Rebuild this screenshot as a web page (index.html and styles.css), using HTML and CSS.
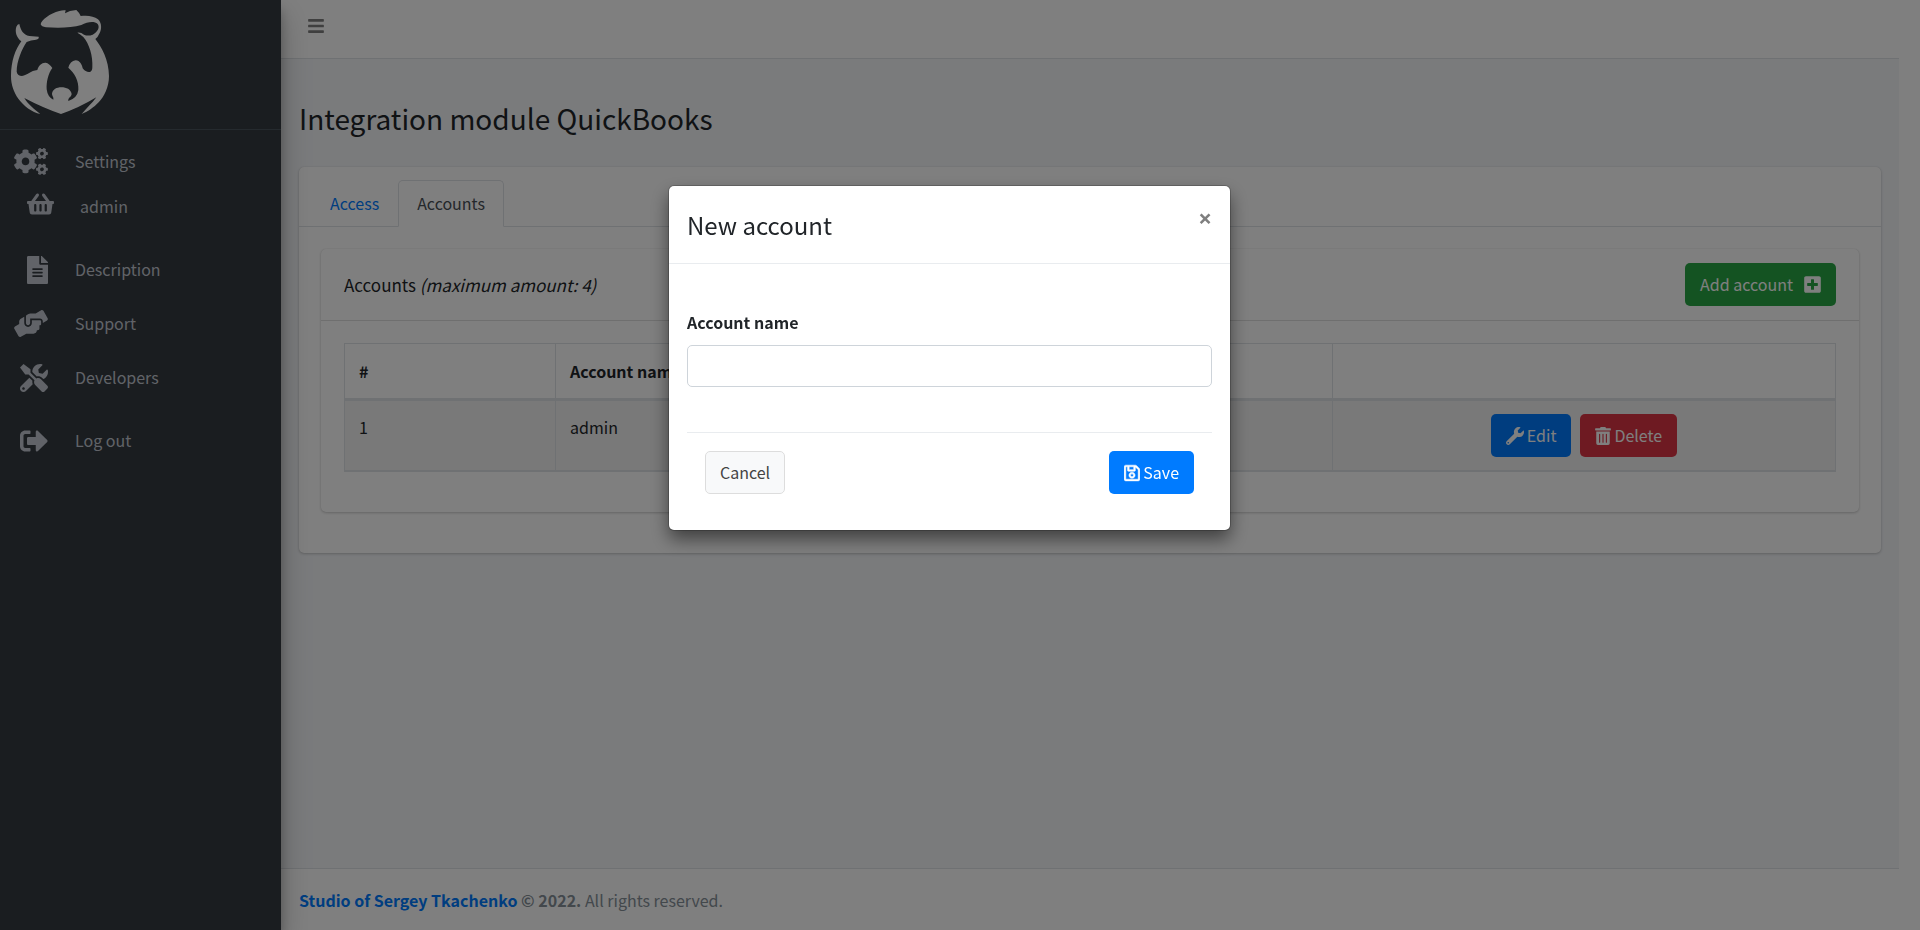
FILE: index.html
```html
<!DOCTYPE html>
<html lang="en">
<head>
<meta charset="utf-8">
<meta name="viewport" content="width=device-width, initial-scale=1">
<title>Integration module QuickBooks</title>
<link rel="stylesheet" href="styles.css">
</head>
<body>
<div class="page">
  <aside class="sidebar">
    <a class="brand" href="#" aria-label="Home">
      <svg class="brand-logo" viewBox="30 27 300 318" aria-hidden="true">
        <path d="M122 73C124 60 150 40 178 33Q188 30 197 31L195 40L210 33L229 30Q238 38 242 48C262 45 282 48 294 58C306 70 305 88 299 99Q294 111 286 117C304 140 327 180 327 228C327 262 312 290 296 307C282 322 262 336 245 342C258 326 276 310 289 292Q236 324 183 342Q130 324 73 294C85 314 104 328 121 342C96 337 70 317 55 296C41 276 33 254 33 228C33 184 46 148 64 124C50 113 44 96 49 80Q52 73 58 72C62 90 70 105 88 108L116 110Q118 117 108 119Q92 120 80 126C66 146 50 184 50 215Q53 228 66 228C82 226 92 212 112 210C116 196 126 187 137 188Q148 190 157 204C144 222 139 246 140 268Q143 292 160 299C162 291 156 288 156 281C158 268 170 262 184 262C200 262 212 268 215 282C214 292 204 292 205 303Q232 294 235 270C237 242 224 220 205 203Q210 184 227 181C240 182 246 194 248 205Q258 218 270 216Q277 213 277 202C279 168 268 132 250 111Q240 102 232 98Q242 96 252 104Q264 109 278 104C294 95 300 82 293 72C282 62 262 66 244 75C216 84 174 84 138 82Q124 80 122 73Z"/>
      </svg>
    </a>
    <nav class="menu" aria-label="Main menu">
      <a class="menu-item" href="#">
        <span class="menu-icon"><svg width="34" height="27" viewBox="0 0 640 512" aria-hidden="true"><path d="M512.1 191l-8.2 14.3c-3 5.3-9.4 7.5-15.1 5.4-11.8-4.4-22.6-10.7-32.1-18.6-4.6-3.8-5.8-10.5-2.8-15.7l8.2-14.3c-6.9-8-12.3-17.3-15.9-27.4h-16.5c-6 0-11.2-4.3-12.2-10.3-2-12-2.1-24.6 0-37.1 1-6 6.2-10.4 12.2-10.4h16.5c3.6-10.1 9-19.4 15.9-27.4l-8.2-14.3c-3-5.2-1.9-11.9 2.8-15.7 9.5-7.9 20.4-14.2 32.1-18.6 5.7-2.1 12.1.1 15.1 5.4l8.2 14.3c10.5-1.9 21.2-1.9 31.7 0L552 6.3c3-5.3 9.4-7.5 15.1-5.4 11.8 4.4 22.6 10.7 32.1 18.6 4.6 3.8 5.8 10.5 2.8 15.7l-8.2 14.3c6.9 8 12.3 17.3 15.9 27.4h16.5c6 0 11.2 4.3 12.2 10.3 2 12 2.1 24.6 0 37.1-1 6-6.2 10.4-12.2 10.4h-16.5c-3.6 10.1-9 19.4-15.9 27.4l8.2 14.3c3 5.2 1.9 11.9-2.8 15.7-9.5 7.9-20.4 14.2-32.1 18.6-5.7 2.1-12.1-.1-15.1-5.4l-8.2-14.3c-10.4 1.9-21.2 1.9-31.7 0zm-10.5-58.8c38.5 29.6 82.4-14.3 52.8-52.8-38.5-29.7-82.4 14.3-52.8 52.8zM386.3 286.1l33.7 16.8c10.1 5.8 14.5 18.1 10.5 29.1-8.9 24.2-26.4 46.4-42.6 65.8-7.4 8.9-20.2 11.1-30.3 5.3l-29.1-16.8c-16 13.7-34.6 24.6-54.9 31.7v33.6c0 11.6-8.3 21.6-19.7 23.6-24.6 4.2-50.4 4.4-75.9 0-11.5-2-20-11.9-20-23.6V418c-20.3-7.2-38.9-18-54.9-31.7L74 403c-10 5.8-22.9 3.6-30.3-5.3-16.2-19.4-33.3-41.6-42.2-65.7-4-10.9.4-23.2 10.5-29.1l33.3-16.8c-3.9-20.9-3.9-42.4 0-63.4L12 205.8c-10.1-5.8-14.6-18.1-10.5-29 8.9-24.2 26-46.4 42.2-65.8 7.4-8.9 20.2-11.1 30.3-5.3l29.1 16.8c16-13.7 34.6-24.6 54.9-31.7V57.1c0-11.5 8.2-21.5 19.6-23.5 24.6-4.2 50.5-4.4 76-.1 11.5 2 20 11.9 20 23.6v33.6c20.3 7.2 38.9 18 54.9 31.7l29.1-16.8c10-5.8 22.9-3.6 30.3 5.3 16.2 19.4 33.2 41.6 42.1 65.8 4 10.9.1 23.2-10 29.1l-33.7 16.8c3.9 21 3.9 42.5 0 63.5zm-117.6 21.1c59.2-77-28.7-164.9-105.7-105.7-59.2 77 28.7 164.9 105.7 105.7zm243.4 182.7l-8.2 14.3c-3 5.3-9.4 7.5-15.1 5.4-11.8-4.4-22.6-10.7-32.1-18.6-4.6-3.8-5.8-10.5-2.8-15.7l8.2-14.3c-6.9-8-12.3-17.3-15.9-27.4h-16.5c-6 0-11.2-4.3-12.2-10.3-2-12-2.1-24.6 0-37.1 1-6 6.2-10.4 12.2-10.4h16.5c3.6-10.1 9-19.4 15.9-27.4l-8.2-14.3c-3-5.2-1.9-11.9 2.8-15.7 9.5-7.9 20.4-14.2 32.1-18.6 5.7-2.1 12.1.1 15.1 5.4l8.2 14.3c10.5-1.9 21.2-1.9 31.7 0l8.2-14.3c3-5.3 9.4-7.5 15.1-5.4 11.8 4.4 22.6 10.7 32.1 18.6 4.6 3.8 5.8 10.5 2.8 15.7l-8.2 14.3c6.9 8 12.3 17.3 15.9 27.4h16.5c6 0 11.2 4.3 12.2 10.3 2 12 2.1 24.6 0 37.1-1 6-6.2 10.4-12.2 10.4h-16.5c-3.6 10.1-9 19.4-15.9 27.4l8.2 14.3c3 5.2 1.9 11.9-2.8 15.7-9.5 7.9-20.4 14.2-32.1 18.6-5.7 2.1-12.1-.1-15.1-5.4l-8.2-14.3c-10.4 1.9-21.2 1.9-31.7 0zM501.6 431c38.5 29.6 82.4-14.3 52.8-52.8-38.5-29.6-82.4 14.3-52.8 52.8z"/></svg></span>
        <span>Settings</span>
      </a>
      <a class="menu-item menu-item-sub" href="#">
        <span class="menu-icon"><svg width="27" height="24" viewBox="0 0 576 512" aria-hidden="true"><path d="M576 216v16c0 13.255-10.745 24-24 24h-8l-26.113 182.788C514.509 462.435 494.257 480 470.37 480H105.63c-23.887 0-44.139-17.565-47.518-41.212L32 256h-8c-13.255 0-24-10.745-24-24v-16c0-13.255 10.745-24 24-24h67.341l106.78-146.821c10.395-14.292 30.407-17.453 44.701-7.058 14.293 10.395 17.453 30.408 7.058 44.701L170.477 192h235.046L326.12 82.821c-10.395-14.292-7.234-34.306 7.059-44.701 14.291-10.395 34.306-7.235 44.701 7.058L484.659 192H552c13.255 0 24 10.745 24 24zM312 392V280c0-13.255-10.745-24-24-24s-24 10.745-24 24v112c0 13.255 10.745 24 24 24s24-10.745 24-24zm112 0V280c0-13.255-10.745-24-24-24s-24 10.745-24 24v112c0 13.255 10.745 24 24 24s24-10.745 24-24zm-224 0V280c0-13.255-10.745-24-24-24s-24 10.745-24 24v112c0 13.255 10.745 24 24 24s24-10.745 24-24z"/></svg></span>
        <span>admin</span>
      </a>
      <a class="menu-item menu-item-section" href="#">
        <span class="menu-icon"><svg width="21" height="28" viewBox="0 0 384 512" aria-hidden="true"><path d="M224 136V0H24C10.7 0 0 10.7 0 24v464c0 13.3 10.7 24 24 24h336c13.3 0 24-10.7 24-24V160H248c-13.2 0-24-10.8-24-24zm64 236c0 6.6-5.4 12-12 12H108c-6.6 0-12-5.4-12-12v-8c0-6.6 5.4-12 12-12h168c6.6 0 12 5.4 12 12v8zm0-64c0 6.6-5.4 12-12 12H108c-6.6 0-12-5.4-12-12v-8c0-6.6 5.4-12 12-12h168c6.6 0 12 5.4 12 12v8zm0-72v8c0 6.6-5.4 12-12 12H108c-6.6 0-12-5.4-12-12v-8c0-6.6 5.4-12 12-12h168c6.6 0 12 5.4 12 12zm96-114.1v6.1H256V0h6.1c6.4 0 12.5 2.5 17 7l97.9 98c4.5 4.5 7 10.6 7 16.9z"/></svg></span>
        <span>Description</span>
      </a>
      <a class="menu-item menu-item-spaced" href="#">
        <span class="menu-icon"><svg width="34" height="27" viewBox="0 0 640 512" aria-hidden="true"><path d="M488 192H336v56c0 39.7-32.3 72-72 72s-72-32.3-72-72V126.4l-64.9 39C107.8 176.9 96 197.8 96 220.2v47.3l-80 46.2C.7 322.5-4.6 342.1 4.3 357.4l80 138.6c8.8 15.3 28.4 20.5 43.7 11.7L231.4 448H368c35.3 0 64-28.7 64-64h16c17.7 0 32-14.3 32-32v-64h8c13.3 0 24-10.7 24-24v-48c0-13.3-10.7-24-24-24zm147.7-37.4L555.7 16C546.9.7 527.3-4.5 512 4.3L408.6 64H306.4c-12 0-23.7 3.4-33.9 9.7L239 94.6c-9.4 5.8-15 16.1-15 27.1V248c0 22.1 17.9 40 40 40s40-17.9 40-40v-88h184c30.9 0 56 25.1 56 56v28.5l80-46.2c15.3-8.9 20.5-28.4 11.7-43.7z"/></svg></span>
        <span>Support</span>
      </a>
      <a class="menu-item menu-item-spaced" href="#">
        <span class="menu-icon"><svg width="28" height="28" viewBox="0 0 512 512" aria-hidden="true"><path d="M501.1 395.7L384 278.6c-23.1-23.1-57.6-27.6-85.4-13.9L192 158.1V96L64 0 0 64l96 128h62.1l106.6 106.6c-13.6 27.8-9.2 62.3 13.9 85.4l117.1 117.1c14.6 14.6 38.2 14.6 52.7 0l52.7-52.7c14.5-14.6 14.5-38.2 0-52.7zM331.7 225c28.3 0 54.9 11 74.9 31l19.4 19.4c15.8-6.9 30.8-16.5 43.8-29.5 37.1-37.1 49.7-89.3 37.9-136.7-2.2-9-13.5-12.1-20.1-5.5l-74.4 74.4-67.9-11.3L334 98.9l74.4-74.4c6.6-6.6 3.4-17.9-5.7-20.2-47.4-11.7-99.6.9-136.6 37.9-28.5 28.5-41.9 66.1-41.2 103.6l82.1 82.1c8.1-1.9 16.5-2.9 24.7-2.9zm-103.9 82l-56.7-56.7L18.7 402.8c-25 25-25 65.5 0 90.5s65.5 25 90.5 0l123.6-123.6c-7.6-19.9-9.9-41.6-5-62.7zM64 472c-13.2 0-24-10.8-24-24 0-13.3 10.7-24 24-24s24 10.7 24 24c0 13.2-10.7 24-24 24z"/></svg></span>
        <span>Developers</span>
      </a>
      <a class="menu-item menu-item-section" href="#">
        <span class="menu-icon"><svg width="28" height="28" viewBox="0 0 512 512" aria-hidden="true"><path d="M497 273L329 441c-15 15-41 4.500-41-17v-96H152c-13.300 0-24-10.700-24-24v-96c0-13.300 10.700-24 24-24h136V88c0-21.400 25.900-32 41-17l168 168c9.300 9.400 9.300 24.600 0 34zM192 436v-40c0-6.600-5.400-12-12-12H96c-17.700 0-32-14.300-32-32V160c0-17.700 14.300-32 32-32h84c6.600 0 12-5.400 12-12V76c0-6.600-5.400-12-12-12H96c-53 0-96 43-96 96v192c0 53 43 96 96 96h84c6.600 0 12-5.400 12-12z"/></svg></span>
        <span>Log out</span>
      </a>
    </nav>
  </aside>

  <div class="main">
    <header class="topbar">
      <button class="toggle" type="button" aria-label="Toggle menu">
        <svg width="16" height="18" viewBox="0 0 448 512" aria-hidden="true"><path d="M16 132h416c8.800 0 16-7.200 16-16V76c0-8.800-7.200-16-16-16H16C7.200 60 0 67.200 0 76v40c0 8.800 7.200 16 16 16zm0 160h416c8.800 0 16-7.200 16-16v-40c0-8.800-7.200-16-16-16H16c-8.800 0-16 7.200-16 16v40c0 8.800 7.200 16 16 16zm0 160h416c8.800 0 16-7.200 16-16v-40c0-8.800-7.200-16-16-16H16c-8.800 0-16 7.200-16 16v40c0 8.800 7.200 16 16 16z"/></svg>
      </button>
    </header>

    <main class="content">
      <h1 class="page-title">Integration module QuickBooks</h1>
      <section class="card">
        <nav class="tabs" aria-label="Sections">
          <a class="tab" href="#">Access</a>
          <a class="tab tab-active" href="#" aria-current="page">Accounts</a>
        </nav>
        <div class="card-body">
          <section class="card card-inner">
            <div class="card-header">
              <div class="card-title">Accounts <i>(maximum amount: 4)</i></div>
              <button class="btn btn-success" type="button">Add account
                <svg width="17" height="19" viewBox="0 0 448 512" aria-hidden="true"><path d="M400 32H48C21.500 32 0 53.500 0 80v352c0 26.500 21.500 48 48 48h352c26.500 0 48-21.500 48-48V80c0-26.500-21.500-48-48-48zm-32 252c0 6.600-5.400 12-12 12h-92v92c0 6.600-5.400 12-12 12h-56c-6.600 0-12-5.400-12-12v-92H92c-6.600 0-12-5.400-12-12v-56c0-6.600 5.400-12 12-12h92v-92c0-6.600 5.400-12 12-12h56c6.600 0 12 5.400 12 12v92h92c6.600 0 12 5.400 12 12v56z"/></svg>
              </button>
            </div>
            <div class="card-table">
              <table class="accounts">
                <thead>
                  <tr><th class="col-number" scope="col">#</th><th scope="col">Account name</th><th class="col-actions" scope="col" aria-label="Actions"></th></tr>
                </thead>
                <tbody>
                  <tr>
                    <td>1</td>
                    <td>admin</td>
                    <td>
                      <div class="actions">
                        <button class="btn btn-primary" type="button"><svg width="18" height="18" viewBox="0 0 512 512" aria-hidden="true"><path d="M507.730 109.100c-2.240-9.030-13.540-12.090-20.120-5.510l-74.360 74.360-67.880-11.310-11.310-67.880 74.360-74.360c6.620-6.620 3.430-17.900-5.660-20.160-47.380-11.740-99.550.91-136.580 37.930-39.640 39.640-50.550 97.100-34.050 147.200L18.740 402.760c-24.990 24.990-24.990 65.510 0 90.500 24.990 24.990 65.510 24.990 90.500 0l213.210-213.210c50.120 16.710 107.470 5.680 147.370-34.220 37.070-37.070 49.700-89.320 37.910-136.730zM64 472c-13.250 0-24-10.750-24-24 0-13.260 10.750-24 24-24s24 10.740 24 24c0 13.250-10.750 24-24 24z"/></svg>Edit</button>
                        <button class="btn btn-danger" type="button"><svg width="16" height="18" viewBox="0 0 448 512" aria-hidden="true"><path d="M32 464a48 48 0 0 0 48 48h288a48 48 0 0 0 48-48V128H32zm272-256a16 16 0 0 1 32 0v224a16 16 0 0 1-32 0zm-96 0a16 16 0 0 1 32 0v224a16 16 0 0 1-32 0zm-96 0a16 16 0 0 1 32 0v224a16 16 0 0 1-32 0zM432 32H312l-9.400-18.700A24 24 0 0 0 281.100 0H166.800a23.720 23.720 0 0 0-21.400 13.300L136 32H16A16 16 0 0 0 0 48v32a16 16 0 0 0 16 16h416a16 16 0 0 0 16-16V48a16 16 0 0 0-16-16z"/></svg>Delete</button>
                      </div>
                    </td>
                  </tr>
                </tbody>
              </table>
            </div>
          </section>
        </div>
      </section>
    </main>

    <footer class="footer"><strong><a href="#">Studio of Sergey Tkachenko</a> © 2022.</strong> All rights reserved.</footer>
  </div>
</div>

<div class="overlay">
  <form class="modal" role="dialog" aria-modal="true" aria-labelledby="modal-title">
    <div class="modal-header">
      <h2 class="modal-title" id="modal-title">New account</h2>
      <button class="modal-close" type="button" aria-label="Close">×</button>
    </div>
    <div class="modal-body">
      <div class="field">
        <label for="account-name">Account name</label>
        <input id="account-name" type="text">
      </div>
      <div class="modal-footer">
        <button class="btn btn-light" type="button">Cancel</button>
        <button class="btn btn-primary" type="submit"><svg class="icon-save" width="16" height="18" viewBox="0 0 448 512" aria-hidden="true"><path d="M433.941 129.941l-83.882-83.882A48 48 0 0 0 316.118 32H48C21.490 32 0 53.490 0 80v352c0 26.510 21.490 48 48 48h352c26.510 0 48-21.490 48-48V163.882a48 48 0 0 0-14.059-33.941zM272 80v80H144V80h128zm122 352H54a6 6 0 0 1-6-6V86a6 6 0 0 1 6-6h42v104c0 13.255 10.745 24 24 24h176c13.255 0 24-10.745 24-24V83.882l78.243 78.243a6 6 0 0 1 1.757 4.243V426a6 6 0 0 1-6 6zM224 232c-48.523 0-88 39.477-88 88s39.477 88 88 88 88-39.477 88-88-39.477-88-88-88zm0 128c-22.056 0-40-17.944-40-40s17.944-40 40-40 40 17.944 40 40-17.944 40-40 40z"/></svg>Save</button>
      </div>
    </div>
  </form>
</div>
</body>
</html>
```

FILE: styles.css
```css
*,
*::before,
*::after {
  box-sizing: border-box;
}

body {
  margin: 0;
  background: #fff;
  color: #212529;
  font-family: "Noto Sans CJK SC", "Noto Sans", sans-serif;
  font-size: 16px;
  line-height: 27px;
}

a {
  color: #007bff;
  text-decoration: none;
}

svg {
  display: block;
  flex: none;
  fill: currentColor;
}

button,
input {
  font: inherit;
}

.page {
  display: flex;
  min-height: 100vh;
  padding-right: 21px;
}

/* Sidebar */

.sidebar {
  flex: 0 0 281px;
  z-index: 1;
  background: #343a40;
  box-shadow: 0 14px 28px rgba(0, 0, 0, .25), 0 10px 10px rgba(0, 0, 0, .22);
}

.brand {
  display: block;
  padding: 9px 10px 14px;
  border-bottom: 1px solid #4b545c;
  color: #fff;
}

.brand-logo {
  width: 100px;
  height: 106px;
}

.menu {
  display: flex;
  flex-direction: column;
  padding-top: 9px;
}

.menu-item {
  display: flex;
  align-items: center;
  gap: 27px;
  height: 45px;
  color: #c2c7d0;
}

.menu-icon {
  display: flex;
  justify-content: flex-end;
  width: 48px;
}

.menu-item-sub {
  gap: 26px;
}

.menu-item-sub .menu-icon {
  width: 54px;
  padding-bottom: 6px;
}

.menu-item-section {
  margin-top: 18px;
}

.menu-item-spaced {
  margin-top: 9px;
}

/* Main column */

.main {
  display: flex;
  flex: 1;
  flex-direction: column;
  min-width: 0;
  background: #f4f6f9;
}

.topbar {
  display: flex;
  padding: 8px 9px;
  border-bottom: 1px solid #dee2e6;
  background: #fff;
}

.toggle {
  height: 42px;
  padding: 0 18px 6px;
  border: 0;
  background: none;
  color: rgba(0, 0, 0, .5);
}

.content {
  flex: 1;
  padding: 42px 18px;
}

.page-title {
  margin: 0 0 31px;
  font-size: 28px;
  font-weight: 400;
  line-height: 35px;
}

.card {
  border-radius: 5px;
  background: #fff;
  box-shadow: 0 0 1px rgba(0, 0, 0, .125), 0 1px 3px rgba(0, 0, 0, .2);
}

.card-inner {
  margin-bottom: 19px;
}

.tabs {
  display: flex;
  padding: 13px 12px 0;
  border-bottom: 1px solid #dee2e6;
}

.tab {
  margin-bottom: -1px;
  padding: 9px 18px;
  border: 1px solid transparent;
  border-radius: 5px 5px 0 0;
}

.tab-active {
  border-color: #dee2e6 #dee2e6 #fff;
  background: #fff;
  color: #495057;
}

.card-body {
  padding: 22px;
}

.card-header {
  display: flex;
  align-items: center;
  justify-content: space-between;
  padding: 14px 23px;
  border-bottom: 1px solid #dfdfdf;
}

.card-title {
  font-size: 17px;
}

.card-table {
  padding: 22px 23px 40px;
}

.accounts {
  width: 100%;
  border-collapse: collapse;
  table-layout: fixed;
}

.accounts th,
.accounts td {
  padding: 13px 14px;
  border: 1px solid #dee2e6;
  text-align: left;
  vertical-align: top;
}

.accounts th {
  padding-top: 14px;
  border-bottom-width: 3px;
}

.accounts td {
  border-bottom-width: 2px;
  background: #f2f2f2;
}

.accounts .col-number {
  width: 211px;
}

.accounts .col-actions {
  width: 503px;
}

.actions {
  display: flex;
  justify-content: center;
  gap: 9px;
}

.footer {
  padding: 18px 18px 16px;
  border-top: 1px solid #dee2e6;
  background: #fff;
  color: #869099;
}

/* Buttons */

.btn {
  display: flex;
  align-items: center;
  gap: 3px;
  padding: 7px 14px;
  border: 1px solid transparent;
  border-radius: 5px;
  color: #fff;
}

.btn-primary {
  background: #007bff;
}

.btn-success {
  gap: 11px;
  background: #28a745;
}

.btn-danger {
  background: #dc3545;
}

.btn-light {
  border-color: #ddd;
  background: #f8f9fa;
  color: #444;
}

.icon-save {
  stroke: currentColor;
  stroke-width: 14;
}

/* Dialog */

.overlay {
  position: fixed;
  inset: 0;
  z-index: 2;
  display: flex;
  align-items: flex-start;
  justify-content: center;
  padding: 186px 21px 0 0;
  background: rgba(0, 0, 0, .5);
}

.modal {
  width: 100%;
  max-width: 561px;
  border-radius: 5px;
  background: #fff;
  box-shadow: 0 0 0 1px rgba(0, 0, 0, .2), 0 9px 18px rgba(0, 0, 0, .5);
}

.modal-header {
  display: flex;
  align-items: flex-start;
  justify-content: space-between;
  padding: 18px;
  border-bottom: 1px solid #e9ecef;
}

.modal-title {
  margin: 0;
  font-size: 24px;
  font-weight: 400;
  line-height: 41px;
}

.modal-close {
  padding: 0;
  border: 0;
  background: none;
  color: #7f7f7f;
  font-family: "Open Sans", sans-serif;
  font-size: 24px;
  font-weight: 700;
  line-height: 27px;
}

.modal-body {
  padding: 18px;
}

.field {
  display: flex;
  flex-direction: column;
  gap: 9px;
  padding: 27px 0 45px;
}

.field label {
  font-weight: 700;
}

.field input {
  width: 100%;
  height: 42px;
  padding: 7px 14px;
  border: 1px solid #ced4da;
  border-radius: 5px;
  background: #fff;
  color: #495057;
}

.modal-footer {
  display: flex;
  justify-content: space-between;
  padding: 18px;
  border-top: 1px solid #e9ecef;
}
```
